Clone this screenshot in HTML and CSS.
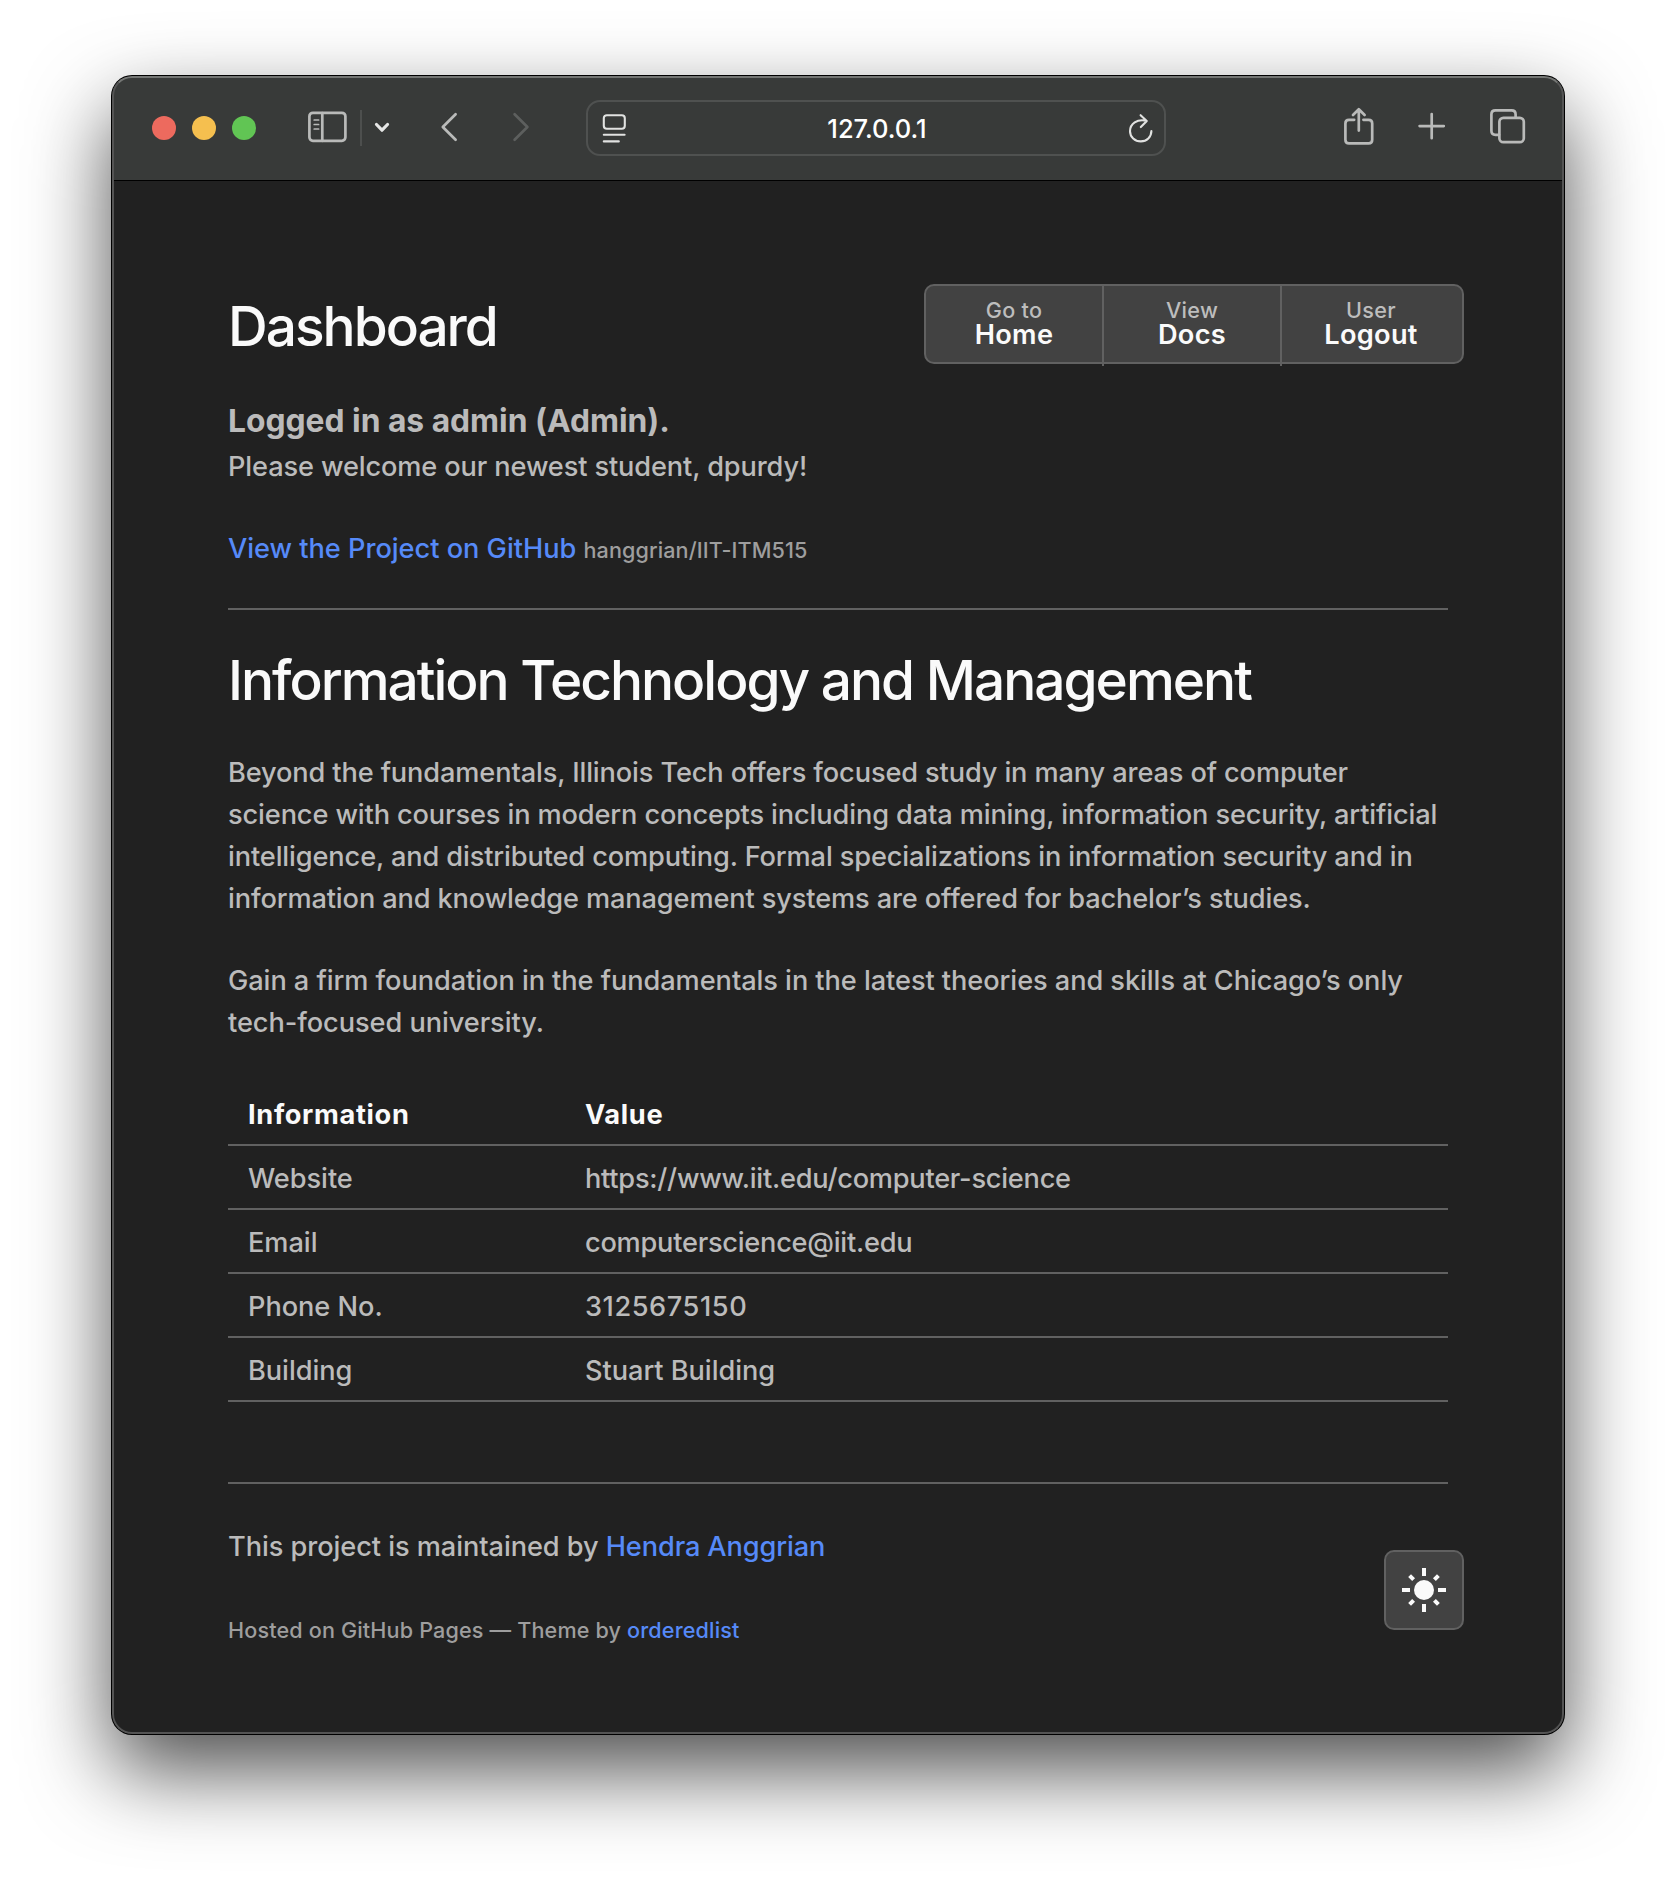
FILE: index.html
```html
<!DOCTYPE html>
<html lang="en">
<head>
<meta charset="utf-8">
<title>Dashboard</title>
<link rel="stylesheet" href="styles.css">
</head>
<body>
<div class="window">
  <header class="toolbar">
    <div class="lights"><span class="light close"></span><span class="light minimize"></span><span class="light zoom"></span></div>
    <svg class="icon sidebar-icon" width="40" height="32" viewBox="0 0 40 32"><rect x="1.4" y="1.8" width="36" height="28" rx="3.5"/><path d="M14.3 2V29.8"/><path class="thin" d="M6.2 9H10.6M6.2 13.5H10.6M6.2 18H10.6"/></svg>
    <span class="divider"></span>
    <svg class="icon chevron" width="16" height="12" viewBox="0 0 16 12"><path d="M2.5 2.5L8 8.2L13.5 2.5"/></svg>
    <svg class="icon back" width="18" height="30" viewBox="0 0 18 30"><path d="M15.6 2.3L2.8 15L15.6 27.7"/></svg>
    <svg class="icon forward" width="18" height="30" viewBox="0 0 18 30"><path d="M2.6 2.3L15.4 15L2.6 27.7"/></svg>
    <div class="address">
      <svg class="icon bright" width="24" height="30" viewBox="0 0 24 30"><rect x="1.8" y="2.2" width="21" height="13.6" rx="3"/><path d="M1.8 21.8H22.6M1.8 28.4H16.8"/></svg>
      <span class="url">127.0.0.1</span>
      <svg class="icon bright" width="26" height="30" viewBox="0 0 26 30"><path d="M18.6 7.8C9 5.5 2 10.9 2 18.3C2 23.9 6.9 28.4 12.8 28.4C18.7 28.4 23.4 24 23.4 18.1M12.6 2.2L18.8 7.9L12.8 14.1"/></svg>
    </div>
    <svg class="icon share" width="30" height="38" viewBox="0 0 30 38"><path d="M10.2 12.8H5Q1.4 12.8 1.4 16.4V32.8Q1.4 36.4 5 36.4H24.6Q28.2 36.4 28.2 32.8V16.4Q28.2 12.8 24.6 12.8H19.4M14.8 2.4V23.6M9 8L14.8 2.2L20.6 8"/></svg>
    <svg class="icon plus" width="28" height="28" viewBox="0 0 28 28"><path d="M13.7 2V26.2M1.6 14.1H25.8"/></svg>
    <svg class="icon tabs" width="36" height="36" viewBox="0 0 36 36"><rect x="9.4" y="9.8" width="24.4" height="24.4" rx="4"/><path d="M9 26.8H5.4Q1.4 26.8 1.4 22.8V6.4Q1.4 2.4 5.4 2.4H21.6Q25.6 2.4 25.6 6.4V9.4"/></svg>
  </header>

  <main class="page">
    <div class="masthead">
      <h1>Dashboard</h1>
      <nav class="actions">
        <a class="action"><small>Go to</small><strong>Home</strong></a>
        <a class="action"><small>View</small><strong>Docs</strong></a>
        <a class="action"><small>User</small><strong>Logout</strong></a>
      </nav>
    </div>
    <h3>Logged in as admin (Admin).</h3>
    <p class="welcome">Please welcome our newest student, dpurdy!</p>
    <p class="project"><a>View the Project on GitHub</a> <small>hanggrian/IIT-ITM515</small></p>
    <hr>
    <h1 class="title">Information Technology and Management</h1>
    <p class="intro">Beyond the fundamentals, Illinois Tech offers focused study in many areas of computer<br>science with courses in modern concepts including data mining, information security, artificial<br>intelligence, and distributed computing. Formal specializations in information security and in<br>information and knowledge management systems are offered for bachelor’s studies.</p>
    <p>Gain a firm foundation in the fundamentals in the latest theories and skills at Chicago’s only<br>tech-focused university.</p>
    <table>
      <thead><tr><th class="key">Information</th><th>Value</th></tr></thead>
      <tbody>
        <tr><td>Website</td><td class="address-value">https://www.iit.edu/computer-science</td></tr>
        <tr><td>Email</td><td class="address-value">computerscience@iit.edu</td></tr>
        <tr><td>Phone No.</td><td class="number">3125675150</td></tr>
        <tr><td>Building</td><td>Stuart Building</td></tr>
      </tbody>
    </table>
    <hr class="end">
    <footer>
      <p>This project is maintained by <a>Hendra Anggrian</a></p>
      <p class="hosted">Hosted on GitHub Pages — Theme by <a>orderedlist</a></p>
    </footer>
    <button class="theme" aria-label="Light theme"><svg width="48" height="48" viewBox="-24 -24 48 48"><circle r="10"/><path d="M0-22V-14M0 14V22M-22 0H-14M14 0H22M-14.4-14.4L-10.4-10.4M14.4-14.4L10.4-10.4M-14.4 14.4L-10.4 10.4M14.4 14.4L10.4 10.4"/></svg></button>
  </main>
</div>
</body>
</html>
```
FILE: styles.css
```css
* { box-sizing: border-box; }
body {
  margin: 0;
  padding: 76px 112px 148px;
  background: #fff;
  color: #bbb;
  font: 500 27.2px/42px Inter, "Liberation Sans", sans-serif;
  letter-spacing: -.07px;
  overflow: hidden;
}
.window {
  position: relative;
  height: 1658px;
  border-radius: 20px;
  background: #212121;
  box-shadow: 0 0 0 1px #000, 0 36px 84px rgba(0, 0, 0, .7);
  overflow: hidden;
}
.window::after {
  content: "";
  position: absolute;
  inset: 0;
  border: 2px solid #545454;
  border-top-color: #747674;
  border-radius: 20px;
  pointer-events: none;
}
.toolbar {
  display: flex;
  align-items: center;
  height: 105px;
  padding: 0 38px 1px 40px;
  background: #383a39;
  border-bottom: 1px solid #000;
}
.lights { display: flex; gap: 16px; }
.light { width: 24px; height: 24px; border-radius: 50%; }
.close { background: #ed6a5e; }
.minimize { background: #f5bf4f; }
.zoom { background: #61c554; }
.icon {
  flex: none;
  fill: none;
  stroke: #b9bab9;
  stroke-width: 2.7;
  stroke-linecap: round;
  stroke-linejoin: round;
}
.icon .thin { stroke-width: 1.7; }
.sidebar-icon { margin-left: 52px; margin-top: -2px; }
.divider { width: 2px; height: 36px; margin-left: 12px; background: #4d4f4e; }
.chevron { margin-left: 12px; stroke: #e6e7e6; stroke-width: 3.2; }
.back { margin-left: 50px; margin-top: -2px; }
.forward { margin-left: 54px; margin-top: -2px; stroke: #5d5f5e; }
.address {
  display: flex;
  align-items: center;
  justify-content: space-between;
  width: 580px;
  height: 56px;
  margin-left: 56px;
  padding: 0 10px 0 14px;
  border: 2px solid #4f5150;
  border-radius: 14px;
}
.address .bright { stroke: #e1e2e1; stroke-width: 2.1; }
.url { padding-top: 2px; color: #fff; font-size: 25.5px; font-weight: 500; letter-spacing: 0; }
.share { margin-left: auto; margin-top: -3px; }
.plus { margin-left: 44px; margin-top: -3px; }
.tabs { margin-left: 44px; margin-top: -3px; }
.page { padding: 103px 116px 0; }
.masthead { display: flex; justify-content: space-between; height: 80px; margin-right: -16px; }
h1, h3, p { margin: 0; }
h1 {
  margin-top: 12px;
  color: #fafafa;
  font-size: 55px;
  font-weight: 550;
  line-height: 60px;
  letter-spacing: -2px;
}
h3 { margin-top: 36px; font-size: 31.8px; font-weight: 700; letter-spacing: -.02px; }
p { white-space: nowrap; }
p + p { margin-top: 40px; }
.welcome { margin-top: 4px; letter-spacing: -.13px; }
small { color: #9e9e9e; font-size: 21.6px; letter-spacing: .1px; }
.project small { line-height: 0; }
.project a { letter-spacing: -.03px; }
a { color: #568af8; }
hr { height: 2px; margin: 38px 0 0; border: 0; background: #616161; }
.title { margin: 40px 0 42px; }
.intro { letter-spacing: -.13px; }
.actions {
  display: flex;
  align-items: flex-start;
  width: 540px;
  height: 80px;
  border: 2px solid #616161;
  border-radius: 10px;
  background: #424242;
}
.action {
  display: flex;
  flex-direction: column;
  align-items: center;
  width: 178px;
  height: 80px;
  padding-top: 12px;
  border-right: 2px solid #616161;
}
.action:last-child { border: 0; }
.action small { line-height: 25px; color: #bdbdbd; letter-spacing: .3px; }
.action strong { line-height: 24px; color: #fafafa; font-weight: 600; letter-spacing: .28px; }
table { width: 100%; margin-top: 38px; border-collapse: separate; border-spacing: 0; }
th, td {
  height: 64px;
  padding: 12px 20px 8px;
  border-bottom: 2px solid #616161;
  text-align: left;
  line-height: 42px;
  letter-spacing: -.05px;
}
th { color: #fafafa; font-weight: 700; letter-spacing: .66px; }
.key { width: 337px; }
.address-value { letter-spacing: -.25px; }
.number { letter-spacing: .55px; }
.end { margin-top: 80px; }
footer { padding-top: 42px; }
footer a { letter-spacing: -.12px; }
footer .hosted { margin-top: 45px; color: #9e9e9e; font-size: 21.6px; line-height: 34px; letter-spacing: .15px; }
footer .hosted a { letter-spacing: .15px; }
.theme {
  position: absolute;
  right: 100px;
  bottom: 104px;
  display: grid;
  place-items: center;
  width: 80px;
  height: 80px;
  padding: 0;
  border: 2px solid #616161;
  border-radius: 10px;
  background: #424242;
}
.theme svg { fill: #fafafa; stroke: #fafafa; stroke-width: 4; }
.theme circle { stroke: none; }
```
